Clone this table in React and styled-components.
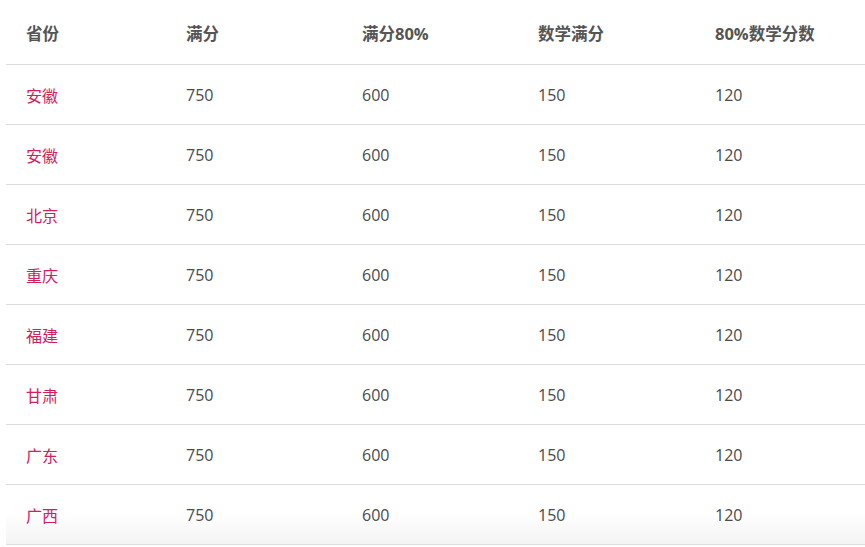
import React from 'react'
import styled, { createGlobalStyle } from 'styled-components'

const rows = ['安徽', '安徽', '北京', '重庆', '福建', '甘肃', '广东', '广西']
const headers = ['省份', '满分', '满分80%', '数学满分', '80%数学分数']
const widths = [160, 176, 176, 177, 170]

const GlobalStyle = createGlobalStyle`
  body {
    margin: 0;
    background: #fff;
    font-family: "Open Sans", "Noto Sans CJK SC", sans-serif;
  }
`

const App = () => {
  return (
    <Wrapper>
      <GlobalStyle />
      <Table>
        <colgroup>
          {widths.map((w, i) => <col key={i} style={{ width: w }} />)}
        </colgroup>
        <thead>
          <tr>
            {headers.map((h) => <HeadCell key={h}>{h}</HeadCell>)}
          </tr>
        </thead>
        <tbody>
          {rows.map((p, i) => (
            <Row key={i} $last={i === rows.length - 1}>
              <Cell $province>{p}</Cell>
              <Cell>750</Cell>
              <Cell>600</Cell>
              <Cell>150</Cell>
              <Cell>120</Cell>
            </Row>
          ))}
        </tbody>
      </Table>
    </Wrapper>
  )
}

const Wrapper = styled.div`
padding-left: 6px;
height: 547px;
overflow: hidden;
`

const Table = styled.table`
width: 859px;
border-collapse: collapse;
table-layout: fixed;
`

const HeadCell = styled.th`
height: 62px;
padding: 2px 0 0 20px;
text-align: left;
font-size: 16.5px;
font-weight: 700;
color: #555;
border-bottom: 1px solid #ddd;
`

const Row = styled.tr`
background: ${(p) => (p.$last ? 'linear-gradient(to bottom, #fff 45%, #f3f3f3)' : 'transparent')};
`

const Cell = styled.td`
height: 59px;
padding: 0 0 0 20px;
font-size: 16px;
color: ${(p) => (p.$province ? '#d0215d' : '#4a4a4a')};
border-bottom: 1px solid #ddd;
`

export default App
